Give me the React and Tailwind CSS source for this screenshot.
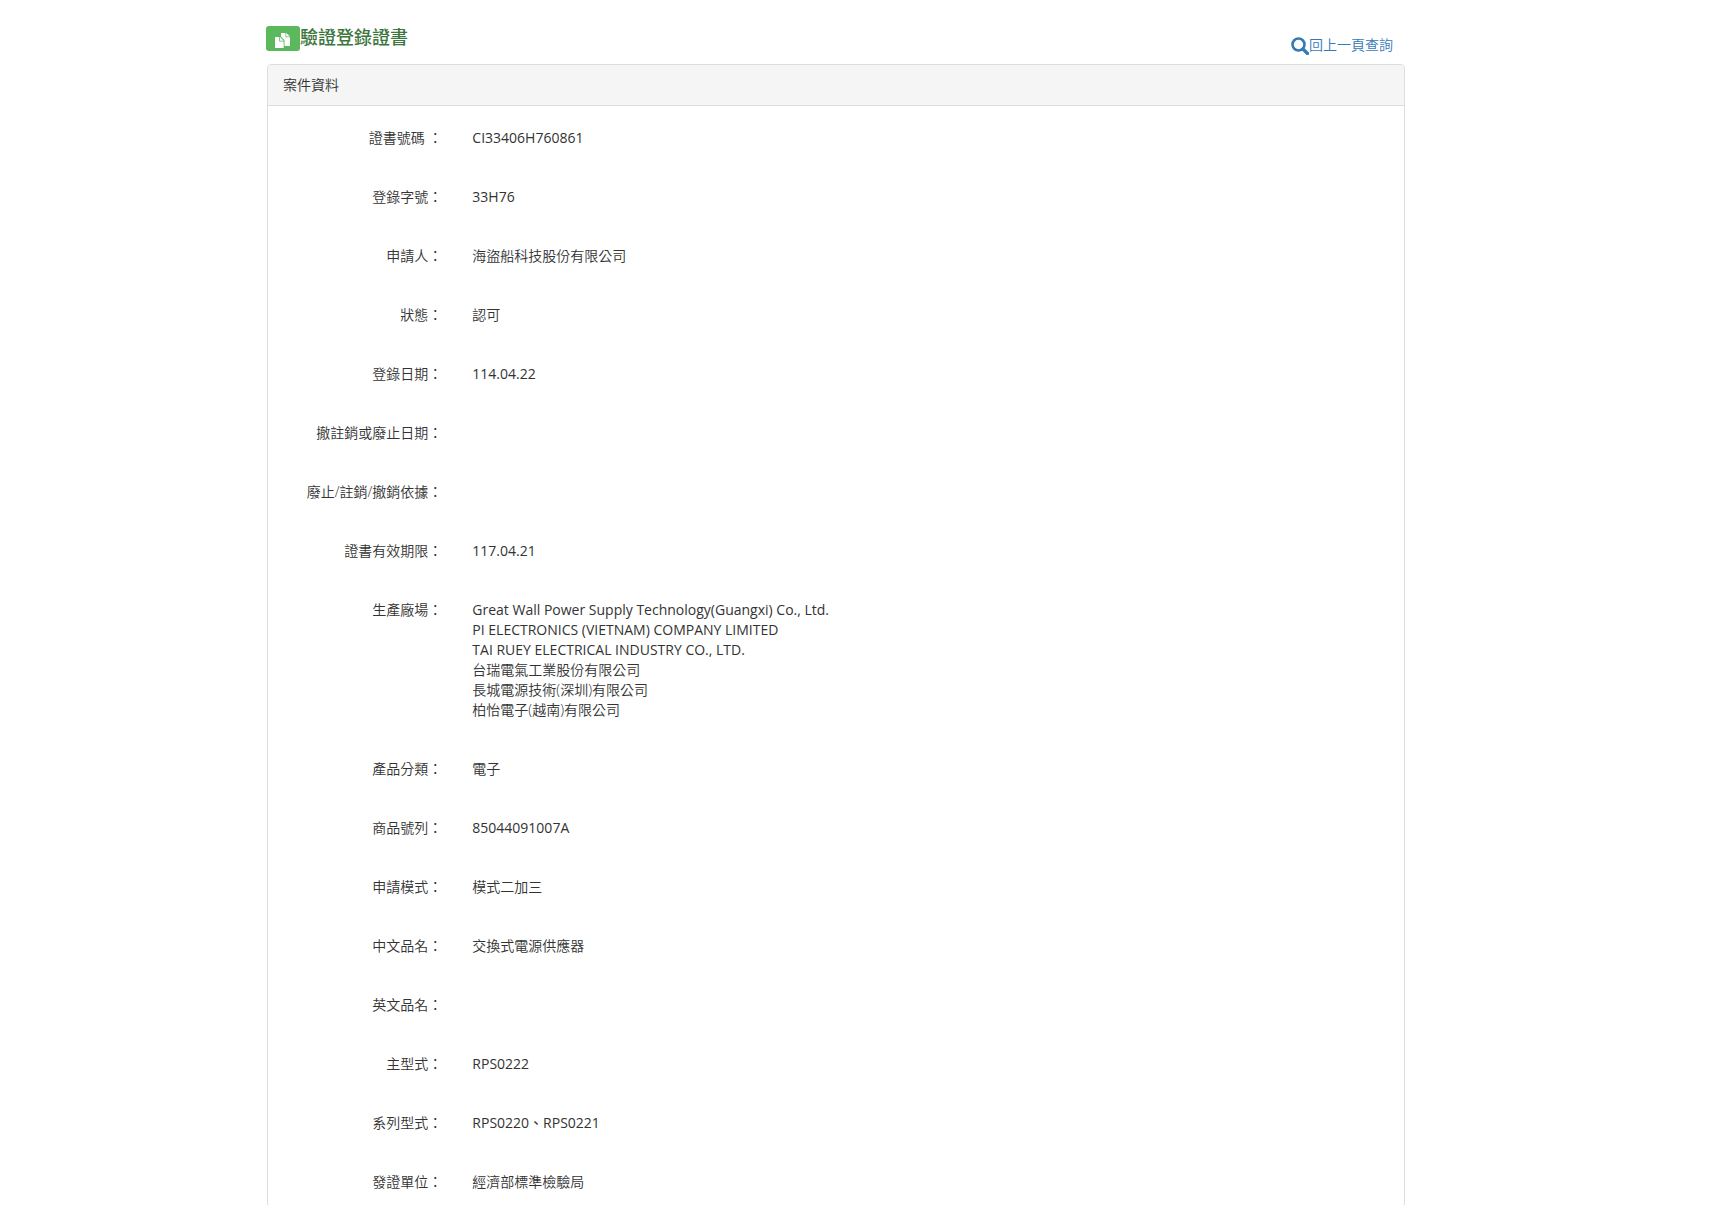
const fields = [
  { label: '證書號碼 ：', values: ['CI33406H760861'] },
  { label: '登錄字號：', values: ['33H76'] },
  { label: '申請人：', values: ['海盜船科技股份有限公司'] },
  { label: '狀態：', values: ['認可'] },
  { label: '登錄日期：', values: ['114.04.22'] },
  { label: '撤註銷或廢止日期：', values: [] },
  { label: '廢止/註銷/撤銷依據：', values: [] },
  { label: '證書有效期限：', values: ['117.04.21'] },
  {
    label: '生產廠場：',
    values: [
      'Great Wall Power Supply Technology(Guangxi) Co., Ltd.',
      'PI ELECTRONICS (VIETNAM) COMPANY LIMITED',
      'TAI RUEY ELECTRICAL INDUSTRY CO., LTD.',
      '台瑞電氣工業股份有限公司',
      '長城電源技術(深圳)有限公司',
      '柏怡電子(越南)有限公司',
    ],
  },
  { label: '產品分類：', values: ['電子'] },
  { label: '商品號列：', values: ['85044091007A'] },
  { label: '申請模式：', values: ['模式二加三'] },
  { label: '中文品名：', values: ['交換式電源供應器'] },
  { label: '英文品名：', values: [] },
  { label: '主型式：', values: ['RPS0222'] },
  { label: '系列型式：', values: ['RPS0220、RPS0221'] },
  { label: '發證單位：', values: ['經濟部標準檢驗局'] },
];

// Latin text has no demi-light cut, so it uses the regular weight
const isLatin = (text) => /^[A-Za-z0-9]/.test(text);

function DuplicateIcon() {
  return (
    <svg className="h-4 w-4" viewBox="0 0 16 16" fill="white" aria-hidden="true">
      <path d="M0 4h4.300v4.500h4.400V15H0z" />
      <path d="M5 4l3.700 3.800H5z" />
      <path d="M6 0h4.500v4.300H15V13H9.500V7.200L6 3.500z" />
      <path d="M11.200 0L15 3.600h-3.800z" />
    </svg>
  );
}

function SearchIcon() {
  return (
    <svg className="h-[18px] w-[18px]" viewBox="0 0 18 18" fill="none" stroke="currentColor" aria-hidden="true">
      <circle cx="7.500" cy="7.500" r="6" strokeWidth="2.600" />
      <path d="M12 12l4.500 4.500" strokeWidth="3.200" strokeLinecap="round" />
    </svg>
  );
}

function Field({ label, values }) {
  return (
    <div className="flex pb-[39px]">
      <dt className="w-1/6 shrink-0 px-[15px] text-right whitespace-pre">{label}</dt>
      <dd className="min-h-5 flex-1 px-[15px]">
        {values.map((value) => (
          <p key={value} className={isLatin(value) ? 'font-normal' : ''}>
            {value}
          </p>
        ))}
      </dd>
    </div>
  );
}

export default function App() {
  return (
    <div lang="zh-Hant" className="min-h-screen bg-white pr-[51px] font-['Open_Sans','Noto_Sans_CJK_TC',sans-serif] text-sm leading-5 font-[350] text-[#333]">
      <main className="mx-auto max-w-[1138px]">
        <header className="flex h-16 items-start justify-between">
          <h1 className="-ml-px flex items-end pt-[23px] text-lg font-medium text-[#3c763d]">
            <span className="flex h-[25px] w-[34px] items-center justify-center rounded-[3px] bg-[#5cb85c] pt-1">
              <DuplicateIcon />
            </span>
            驗證登錄證書
          </h1>
          <a href="#search" className="flex items-end pt-[35px] pr-3 text-[#337ab7] hover:underline">
            <SearchIcon />
            回上一頁查詢
          </a>
        </header>

        <section className="rounded border border-[#ddd]">
          <h2 className="rounded-t-[3px] border-b border-[#ddd] bg-[#f5f5f5] px-[15px] py-[10px]">案件資料</h2>
          <dl className="pt-[22px]">
            {fields.map((field) => (
              <Field key={field.label} label={field.label} values={field.values} />
            ))}
          </dl>
        </section>
      </main>
    </div>
  );
}
